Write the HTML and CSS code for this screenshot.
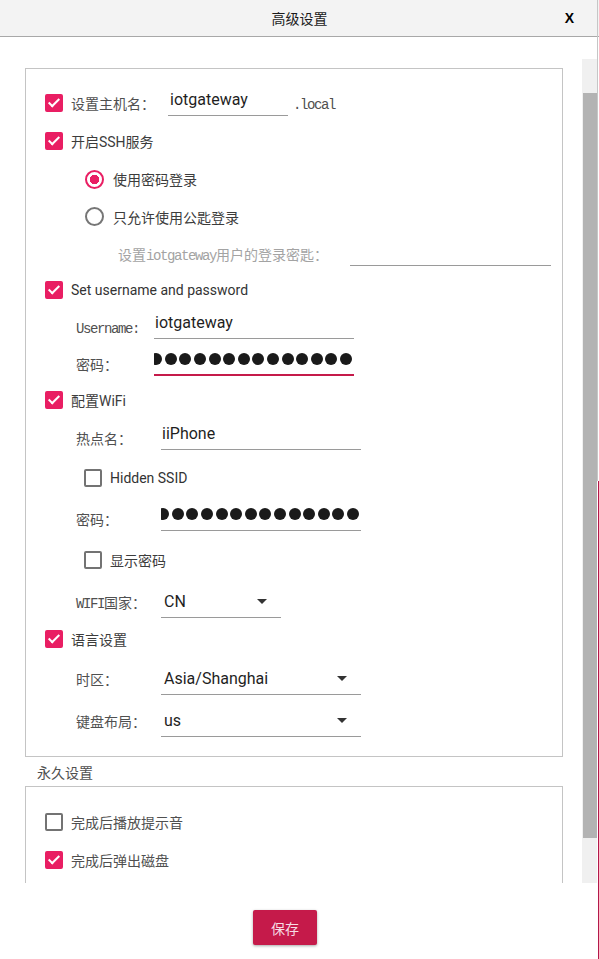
FILE: index.html
```html
<!DOCTYPE html>
<html lang="zh-CN">
<head>
<meta charset="utf-8">
<title>高级设置</title>
<link rel="stylesheet" href="styles.css">
</head>
<body>
<div class="window">
  <header class="titlebar">
    <span class="title">高级设置</span>
    <span class="close">X</span>
  </header>
  <div class="main">
    <div class="scroll">
      <section class="box box-main">
        <div class="row row-top">
          <span class="cb on"></span>
          <span class="lbl">设置主机名：</span>
          <div class="field f-host"><span>iotgateway</span></div>
          <span class="suffix">.local</span>
        </div>
        <div class="row row-top">
          <span class="cb on"></span>
          <span class="ctext">开启SSH服务</span>
        </div>
        <div class="row row-radio">
          <span class="radio on"></span>
          <span class="ctext">使用密码登录</span>
        </div>
        <div class="row row-radio">
          <span class="radio"></span>
          <span class="ctext">只允许使用公匙登录</span>
        </div>
        <div class="row row-key">
          <span class="lbl dis">设置<span class="asc">iotgateway</span>用户的登录密匙：</span>
          <div class="field text f-key"></div>
        </div>
        <div class="row row-top">
          <span class="cb on"></span>
          <span class="ctext en">Set username and password</span>
        </div>
        <div class="row row-field">
          <span class="lbl flab-a"><span class="asc">Username:</span></span>
          <div class="field text w200"><span>iotgateway</span></div>
        </div>
        <div class="row row-field">
          <span class="lbl flab-a">密码：</span>
          <div class="field text w200 dots focus">
            <i></i><i></i><i></i><i></i><i></i><i></i><i></i><i></i><i></i><i></i><i></i><i></i><i></i><i></i>
          </div>
        </div>
        <div class="row row-top">
          <span class="cb on"></span>
          <span class="ctext">配置WiFi</span>
        </div>
        <div class="row row-field">
          <span class="lbl flab-b">热点名：</span>
          <div class="field text w200 pad1"><span>iiPhone</span></div>
        </div>
        <div class="row row-sub">
          <span class="cb"></span>
          <span class="ctext en">Hidden SSID</span>
        </div>
        <div class="row row-field">
          <span class="lbl flab-b">密码：</span>
          <div class="field text w200 dots">
            <i></i><i></i><i></i><i></i><i></i><i></i><i></i><i></i><i></i><i></i><i></i><i></i><i></i><i></i>
          </div>
        </div>
        <div class="row row-sub">
          <span class="cb"></span>
          <span class="ctext">显示密码</span>
        </div>
        <div class="row row-field row-low">
          <span class="lbl flab-b"><span class="asc">WIFI</span>国家：</span>
          <div class="field combo w120"><span>CN</span><span class="caret"></span></div>
        </div>
        <div class="row row-top">
          <span class="cb on"></span>
          <span class="ctext">语言设置</span>
        </div>
        <div class="row row-field">
          <span class="lbl flab-b">时区：</span>
          <div class="field combo w200"><span>Asia/Shanghai</span><span class="caret"></span></div>
        </div>
        <div class="row row-field">
          <span class="lbl flab-b">键盘布局：</span>
          <div class="field combo w200"><span>us</span><span class="caret"></span></div>
        </div>
      </section>
      <div class="sec-label lbl">永久设置</div>
      <section class="box box-extra">
        <div class="row row-top">
          <span class="cb"></span>
          <span class="lbl">完成后播放提示音</span>
        </div>
        <div class="row row-top">
          <span class="cb on"></span>
          <span class="lbl">完成后弹出磁盘</span>
        </div>
      </section>
    </div>
    <div class="vbar"><div class="thumb"></div></div>
  </div>
  <footer class="footer">
    <button class="save" type="button">保存</button>
  </footer>
</div>
</body>
</html>
```

FILE: styles.css
```css
* { box-sizing: border-box; }
html, body { margin: 0; padding: 0; }
body {
  width: 599px;
  height: 959px;
  overflow: hidden;
  background: #fff;
  font-family: "Noto Sans CJK SC", Roboto, sans-serif;
  font-size: 14px;
  color: #505050;
}
.window {
  position: relative;
  width: 599px;
  height: 959px;
  display: flex;
  flex-direction: column;
}
.window::after {
  content: "";
  position: absolute;
  top: 0;
  right: 0;
  width: 2px;
  height: 959px;
  background:
    linear-gradient(#c6c6c6, #c6c6c6) left top / 1px 481px no-repeat,
    linear-gradient(#b3184a, #b3184a) right bottom / 1px 478px no-repeat;
}
.titlebar {
  flex: none;
  height: 37px;
  background: #f3f3f3;
  border-bottom: 1px solid #a8a8a8;
  display: grid;
  grid-template-columns: 1fr auto 1fr;
  align-items: center;
  padding: 0 25px;
}
.title {
  grid-column: 2;
  font-size: 14px;
  color: #1a1a1a;
}
.close {
  justify-self: end;
  font-family: "Liberation Sans", Arial, sans-serif;
  font-weight: bold;
  font-size: 14px;
  color: #000;
}
.main {
  flex: none;
  height: 846px;
  display: flex;
}
.scroll {
  width: 582px;
  height: 846px;
  overflow: hidden;
  padding: 31px 19px 0 25px;
}
.vbar {
  width: 15px;
  height: 824px;
  margin-top: 22px;
  background: #f0f0f0;
  padding: 34px 0 0 1px;
}
.thumb {
  height: 745px;
  background: #b3b3b3;
}
.footer {
  flex: 1;
  display: flex;
  justify-content: center;
  align-items: flex-start;
  padding: 27px 29px 0 0;
}
.save {
  width: 64px;
  height: 35px;
  border: none;
  border-radius: 2px;
  background: #c51a4a;
  color: #f6dde5;
  font-family: "Noto Sans CJK SC", sans-serif;
  font-size: 14px;
  box-shadow: 0 1px 3px rgba(0, 0, 0, 0.35);
}
.box {
  width: 538px;
  border: 1px solid #c4c4c4;
}
.box-main {
  height: 689px;
  padding: 14px 0;
  display: grid;
  grid-template-rows: 39px 38px 38px 37px 37px 36px 38px 36px 36px 39px 41px 41px 41px 40px 38px 41px 43px;
}
.box-extra {
  height: 120px;
  padding-top: 16px;
  display: grid;
  grid-template-rows: 38px 38px;
  align-content: start;
}
.sec-label {
  height: 29px;
  display: flex;
  align-items: center;
  padding-left: 12px;
}
.row {
  display: flex;
  align-items: center;
}
.row-top { padding-left: 19px; }
.row-radio { padding-left: 59px; }
.row-sub { padding-left: 58px; }
.row-field { padding-left: 50px; }
.row-low { padding-top: 4px; }
.row-key { padding-left: 92px; padding-right: 11px; }

.cb {
  position: relative;
  flex: none;
  width: 18px;
  height: 18px;
  border: 2px solid #737373;
  border-radius: 2px;
  margin-right: 8px;
}
.cb.on {
  background: #e91e63;
  border-color: #e91e63;
}
.cb.on::after {
  content: "";
  position: absolute;
  left: 4px;
  top: 0;
  width: 4px;
  height: 9px;
  border: solid #fff;
  border-width: 0 2.5px 2.5px 0;
  transform: rotate(45deg);
}
.radio {
  flex: none;
  width: 19px;
  height: 19px;
  border: 2px solid #767676;
  border-radius: 50%;
  margin-right: 9px;
}
.radio.on {
  border-color: #e91e63;
  background: radial-gradient(circle, #e91e63 0 4.5px, transparent 5px);
}
.lbl { color: #505050; }
.dis { color: #a3a3a3; }
.asc {
  font-family: "Liberation Mono", monospace;
  font-size: 14px;
  letter-spacing: -1.4px;
}
.ctext {
  font-family: Roboto, "Noto Sans CJK SC", sans-serif;
  color: #3c3c3c;
}
.ctext.en { color: #333; }
.flab-a { width: 78px; flex: none; }
.flab-b { width: 85px; flex: none; }
.suffix {
  margin-left: 5px;
  margin-top: 4px;
  font-family: "Liberation Mono", monospace;
  font-size: 14px;
  letter-spacing: -1.4px;
  color: #505050;
}
.field {
  flex: none;
  height: 32px;
  display: flex;
  align-items: center;
  border-bottom: 1px solid #9a9a9a;
  font-family: Roboto, sans-serif;
  font-size: 16px;
  color: #1f1f1f;
  padding-left: 1px;
}
.field.text { margin-bottom: 8px; }
.f-host {
  width: 120px;
  margin-left: 13px;
  margin-bottom: 5px;
  padding-left: 2px;
}
.f-key {
  width: 201px;
  margin-left: auto;
}
.w200 { width: 200px; }
.w120 { width: 120px; }
.pad1 { padding-left: 1px; }
.dots {
  justify-content: flex-end;
  overflow: hidden;
  padding: 0 2px 0 0;
}
.dots i {
  flex: none;
  width: 12px;
  height: 12px;
  margin-left: 2.6px;
  border-radius: 50%;
  background: #1a1a1a;
}
.focus { border-bottom: 2px solid #c51a4a; }
.combo {
  justify-content: space-between;
  padding: 0 14px 0 3px;
}
.caret {
  width: 0;
  height: 0;
  border-left: 5px solid transparent;
  border-right: 5px solid transparent;
  border-top: 5px solid #333;
}
```
